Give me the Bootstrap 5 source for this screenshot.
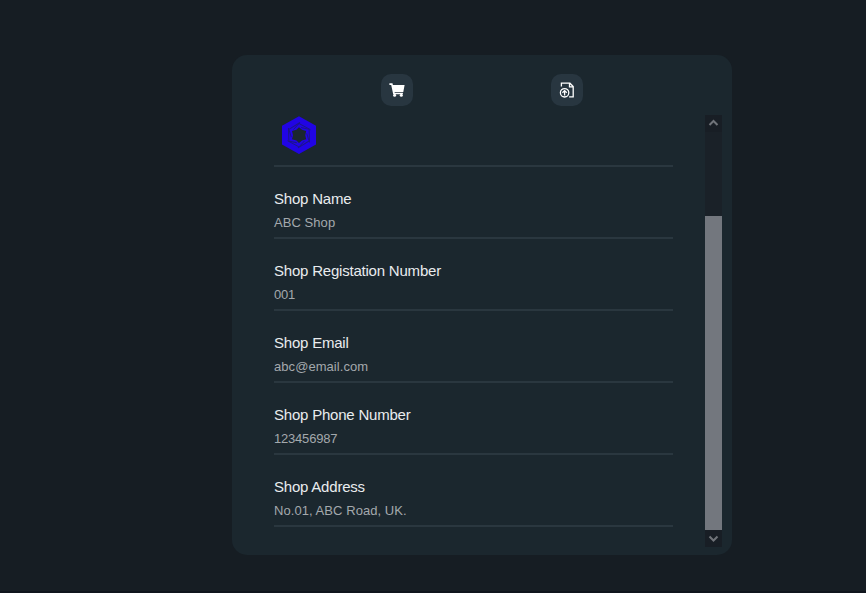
<!DOCTYPE html>
<html lang="en">
<head>
<meta charset="utf-8">
<meta name="viewport" content="width=device-width, initial-scale=1">
<title>Shop Details</title>
<link href="https://cdn.jsdelivr.net/npm/bootstrap@5.3.0/dist/css/bootstrap.min.css" rel="stylesheet">
<style>
body{background:#161d23;font-family:"Liberation Sans",Arial,sans-serif;height:593px}
.shop-panel{width:500px;height:500px;margin:55px 0 0 232px;background:#1b272e;border-radius:15px;padding-top:19px}
.tab-strip{width:340px;height:41px}
.tab-btn{width:32px;height:32px;border:0;border-radius:10px;background:#283640;color:#fff}
.pane{height:432px;padding:0 10px 0 42px}
.fields{width:399px}
.logo-row{height:52px;border-bottom:2px solid #2a373f;padding:0 0 0 7px}
.field{height:72px;padding-top:20px;border-bottom:2px solid #2a373f}
.field-name{font-size:15px;line-height:24px;color:#e9ecee;letter-spacing:-.21px}
.field-value{font-size:13px;line-height:24px;color:#a4a9ad;letter-spacing:.06px}
.field-value.digits{letter-spacing:-.2px}
.scroll-track{width:17px;background:#1a2128}
.scroll-end{height:17px;background:#181e25;padding-bottom:1px}
.scroll-thumb{height:314px;background:#73777e}
.base-line{height:2px;background:#10151d}
</style>
</head>
<body class="d-flex flex-column overflow-hidden">
<main class="shop-panel flex-shrink-0">
  <nav class="tab-strip d-flex mx-auto">
    <div class="w-50 d-flex justify-content-center">
      <button class="tab-btn btn p-0 d-flex align-items-center justify-content-center" aria-label="Shop">
        <svg width="16" height="16" viewBox="0 0 16 16" fill="currentColor"><path d="M.4 1.2h3.1l.4 1.7h11.7l-1.3 7H5.5l.3.9h8.1v1.5H4.2L2.2 2.9H.4z"/><circle cx="5.6" cy="13.3" r="1.5"/><circle cx="12.3" cy="13.3" r="1.5"/></svg>
      </button>
    </div>
    <div class="w-50 d-flex justify-content-center">
      <button class="tab-btn btn p-0 d-flex align-items-center justify-content-center" aria-label="Upload">
        <svg width="16" height="18" viewBox="0 0 16 18" fill="none" stroke="currentColor" stroke-width="1.3"><path d="M2.4 5.5V2.2h8.5l3.3 3.3v10.3h-4.1M10.5 2.2v3.7h3.7"/><circle cx="5.6" cy="11.8" r="4.2"/><path d="M5.6 14.4V9.7M3.4 11.8l2.2-2.2 2.2 2.2"/></svg>
      </button>
    </div>
  </nav>
  <div class="pane d-flex justify-content-between">
    <div class="fields">
      <div class="logo-row">
        <svg width="36" height="40" viewBox="0 0 36 40"><path fill="#2104e4" fill-rule="evenodd" d="M18 1.2 35 10.8v18.8L18 39 1 29.4V10.8zM18 12.2l-2.6 2.6-4.4 1.3 1 4.1-1 4 4.4 1.2 2.6 2.7 3-2.7 4.2-1.2-1-4 1-4.1-4.2-1.3z"/><g fill="none" stroke="#1d1686" stroke-width="1"><path id="blade" d="M12.5 14.5 18 8.5l11.5 6.2"/><path d="M12.5 14.5 18 8.5l11.5 6.2" transform="rotate(60 18 20.2)"/><path d="M12.5 14.5 18 8.5l11.5 6.2" transform="rotate(120 18 20.2)"/><path d="M12.5 14.5 18 8.5l11.5 6.2" transform="rotate(180 18 20.2)"/><path d="M12.5 14.5 18 8.5l11.5 6.2" transform="rotate(240 18 20.2)"/><path d="M12.5 14.5 18 8.5l11.5 6.2" transform="rotate(300 18 20.2)"/></g></svg>
      </div>
      <div class="field"><div class="field-name">Shop Name</div><div class="field-value">ABC Shop</div></div>
      <div class="field"><div class="field-name">Shop Registation Number</div><div class="field-value digits">001</div></div>
      <div class="field"><div class="field-name">Shop Email</div><div class="field-value">abc@email.com</div></div>
      <div class="field"><div class="field-name">Shop Phone Number</div><div class="field-value digits">123456987</div></div>
      <div class="field"><div class="field-name">Shop Address</div><div class="field-value">No.01, ABC Road, UK.</div></div>
    </div>
    <div class="scroll-track d-flex flex-column">
      <div class="scroll-end d-flex align-items-center justify-content-center"><svg width="11" height="8" viewBox="0 0 11 8" fill="none" stroke="#70747a" stroke-width="2"><path d="M1.5 6l4-4 4 4"/></svg></div>
      <div class="scroll-thumb mt-auto"></div>
      <div class="scroll-end d-flex align-items-center justify-content-center"><svg width="11" height="8" viewBox="0 0 11 8" fill="none" stroke="#70747a" stroke-width="2"><path d="M1.5 2.5l4 4 4-4"/></svg></div>
    </div>
  </div>
</main>
<div class="base-line mt-auto"></div>
<script src="https://cdn.jsdelivr.net/npm/bootstrap@5.3.0/dist/js/bootstrap.bundle.min.js"></script>
</body>
</html>
